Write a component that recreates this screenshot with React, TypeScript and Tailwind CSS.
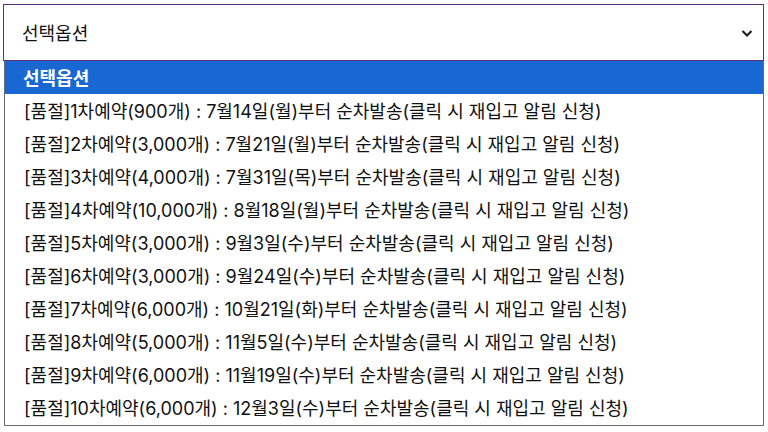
import React from "react";

const items = [
  "[품절]1차예약(900개) : 7월14일(월)부터 순차발송(클릭 시 재입고 알림 신청)",
  "[품절]2차예약(3,000개) : 7월21일(월)부터 순차발송(클릭 시 재입고 알림 신청)",
  "[품절]3차예약(4,000개) : 7월31일(목)부터 순차발송(클릭 시 재입고 알림 신청)",
  "[품절]4차예약(10,000개) : 8월18일(월)부터 순차발송(클릭 시 재입고 알림 신청)",
  "[품절]5차예약(3,000개) : 9월3일(수)부터 순차발송(클릭 시 재입고 알림 신청)",
  "[품절]6차예약(3,000개) : 9월24일(수)부터 순차발송(클릭 시 재입고 알림 신청)",
  "[품절]7차예약(6,000개) : 10월21일(화)부터 순차발송(클릭 시 재입고 알림 신청)",
  "[품절]8차예약(5,000개) : 11월5일(수)부터 순차발송(클릭 시 재입고 알림 신청)",
  "[품절]9차예약(6,000개) : 11월19일(수)부터 순차발송(클릭 시 재입고 알림 신청)",
  "[품절]10차예약(6,000개) : 12월3일(수)부터 순차발송(클릭 시 재입고 알림 신청)",
];

export default function App() {
  return (
    <div
      className="w-[768px] h-[432px] bg-white overflow-hidden pt-[4px] pl-[3px]"
      style={{ fontFamily: '"Inter", "Noto Sans CJK KR", sans-serif' }}
    >
      <div className="w-[761px] h-[57px] border border-[#5e2f80] flex items-center justify-between pl-[18px] pr-[8px] text-[18px] text-[#111]">
        <span className="pt-[2px]">선택옵션</span>
        <svg width="14" height="14" viewBox="0 0 14 14" className="mr-[1px]">
          <path d="M2.5 5 L7 9.5 L11.5 5" fill="none" stroke="#222" strokeWidth="2.2" />
        </svg>
      </div>
      <div className="ml-[1px] w-[760px] h-[365px] border border-t-0 border-[#6b6b6b] flex flex-col text-[18px] text-[#111]">
        <div className="h-[33px] shrink-0 bg-[#1967d2] text-white font-semibold flex items-center pl-[18px] pt-[2px]">
          선택옵션
        </div>
        {items.map((t) => (
          <div key={t} className="h-[33px] shrink-0 flex items-center pl-[19px] pt-[2px] whitespace-nowrap">
            {t}
          </div>
        ))}
      </div>
    </div>
  );
}
